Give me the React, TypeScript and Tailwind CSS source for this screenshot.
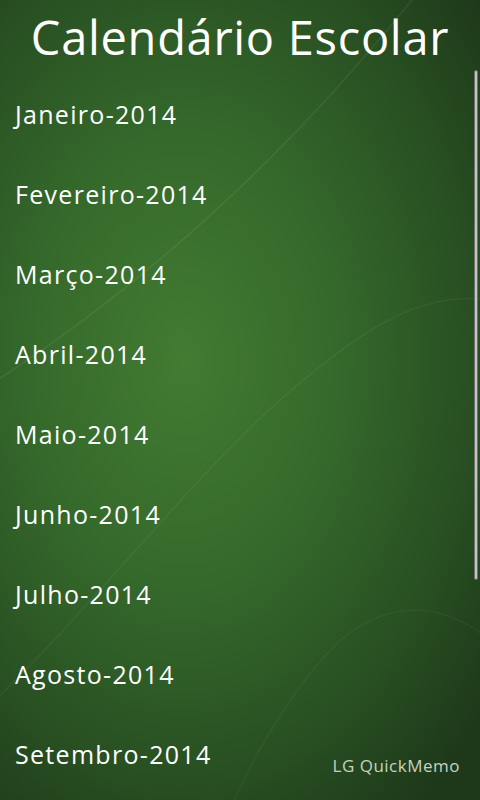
const months = [
  'Janeiro-2014',
  'Fevereiro-2014',
  'Março-2014',
  'Abril-2014',
  'Maio-2014',
  'Junho-2014',
  'Julho-2014',
  'Agosto-2014',
  'Setembro-2014',
];

function Waves() {
  return (
    <svg className="absolute inset-0 h-full w-full" viewBox="0 0 480 800" fill="none">
      <path d="M420 -10 C 340 90, 200 250, -10 385" stroke="rgba(255,255,255,0.07)" strokeWidth="1.5" />
      <path d="M490 300 C 420 290, 360 330, 280 400 C 190 480, 90 610, -10 705" stroke="rgba(255,255,255,0.05)" strokeWidth="1.5" />
      <path d="M490 640 C 440 600, 390 600, 340 640 C 300 680, 260 740, 230 810" stroke="rgba(255,255,255,0.045)" strokeWidth="1.5" />
    </svg>
  );
}

export default function App() {
  return (
    <div
      className="relative h-[800px] w-[480px] overflow-hidden bg-[radial-gradient(ellipse_80%_70%_at_38%_45%,#427b32_0%,#35692b_40%,#284f22_75%,#1e391a_100%)] text-white"
      style={{ fontFamily: '"Open Sans", "DejaVu Sans", sans-serif' }}
    >
      <Waves />
      <div className="relative flex flex-col">
        <h1 className="flex h-[74px] items-center justify-center text-[47px] leading-none tracking-[0.7px]">
          Calendário Escolar
        </h1>
        <ul className="flex flex-col">
          {months.map((m) => (
            <li key={m} className="flex h-[80px] items-center pl-[15px] text-[25px] leading-none tracking-[1.3px]">
              {m}
            </li>
          ))}
        </ul>
      </div>
      <div className="absolute right-[2px] top-[70px] h-[510px] w-[4px] rounded-full border border-[#6f6f6f] bg-[#c4c4c4]" />
      <div className="absolute bottom-[22px] right-[20px] text-[17px] tracking-[0.5px] text-[#c5d3c0]">LG QuickMemo</div>
    </div>
  );
}
